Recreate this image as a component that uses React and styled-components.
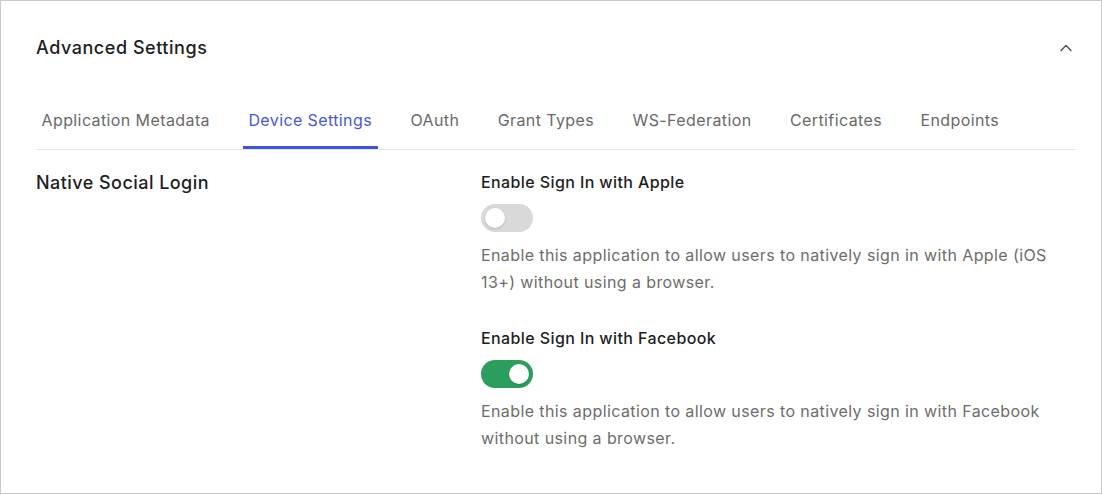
import React, { useState } from "react";
import styled, { createGlobalStyle } from "styled-components";

const Global = createGlobalStyle`
  html, body { margin: 0; padding: 0; background: #fff; }
  body { font-family: Inter, "Noto Sans", "Liberation Sans", sans-serif; -webkit-font-smoothing: antialiased; }
  * { box-sizing: border-box; }
`;

const Card = styled.div`
  width: 1102px;
  height: 494px;
  border: 1px solid #c9c9c9;
  padding: 35px 25px 0 35px;
  background: #fff;
`;

const Header = styled.div`
  display: flex;
  align-items: center;
  justify-content: space-between;
  height: 24px;
`;

const Title = styled.h2`
  margin: 0;
  font-size: 18px;
  line-height: 24px;
  font-weight: 450;
  color: #1e1e1e;
  letter-spacing: 0.03em;
`;

const Chevron = styled.button`
  border: 0;
  background: none;
  padding: 0;
  margin-right: 3px;
  display: flex;
  cursor: pointer;
`;

const TabList = styled.div`
  display: flex;
  gap: 26.9px;
  margin-top: 48px;
  border-bottom: 1px solid #e6e6e6;
`;

const Tab = styled.button`
  border: 0;
  background: none;
  font-family: inherit;
  font-size: 16px;
  line-height: 24px;
  letter-spacing: 0.025em;
  padding: 0 6px 14px 5.5px;
  margin: 0;
  color: ${(p) => (p.$active ? "#4658e0" : "#6a6a6a")};
  border-bottom: 3px solid ${(p) => (p.$active ? "#3d55e6" : "transparent")};
  cursor: pointer;
`;

const Body = styled.div`
  display: grid;
  grid-template-columns: 445px 1fr;
  padding-top: 20px;
`;

const SectionTitle = styled.h3`
  margin: 0;
  font-size: 18px;
  line-height: 26px;
  font-weight: 450;
  letter-spacing: 0.025em;
  color: #1e1e1e;
`;

const Fields = styled.div`
  display: flex;
  flex-direction: column;
  gap: 30px;
`;

const Field = styled.div`
  display: flex;
  flex-direction: column;
  align-items: flex-start;
`;

const Label = styled.div`
  font-size: 16px;
  line-height: 24px;
  font-weight: 450;
  letter-spacing: 0.025em;
  color: #1e1e1e;
`;

const Track = styled.button`
  position: relative;
  margin-top: 10px;
  width: 52px;
  height: 28px;
  border-radius: 14px;
  border: 0;
  padding: 0;
  cursor: pointer;
  background: ${(p) => (p.$on ? "#2b9d5d" : "#d9d9d9")};
`;

const Knob = styled.span`
  position: absolute;
  top: 4px;
  left: ${(p) => (p.$on ? "28px" : "4px")};
  width: 20px;
  height: 20px;
  border-radius: 50%;
  background: #fff;
  box-shadow: 0 1px 2px rgba(0, 0, 0, 0.18);
`;

const Desc = styled.p`
  margin: 10px 0 0;
  font-size: 16px;
  line-height: 27px;
  letter-spacing: 0.025em;
  color: #6d6d6d;
  max-width: 595px;
`;

const tabs = [
  "Application Metadata",
  "Device Settings",
  "OAuth",
  "Grant Types",
  "WS-Federation",
  "Certificates",
  "Endpoints",
];

function Toggle({ on, onClick }) {
  return (
    <Track $on={on} onClick={onClick} role="switch" aria-checked={on}>
      <Knob $on={on} />
    </Track>
  );
}

export default function App() {
  const [apple, setApple] = useState(false);
  const [fb, setFb] = useState(true);
  return (
    <>
      <Global />
      <Card>
        <Header>
          <Title>Advanced Settings</Title>
          <Chevron aria-label="Collapse">
            <svg width="14" height="14" viewBox="0 0 14 14" fill="none">
              <polyline
                points="2,9.5 7,4.5 12,9.5"
                stroke="#555"
                strokeWidth="1.5"
                strokeLinecap="round"
                strokeLinejoin="round"
              />
            </svg>
          </Chevron>
        </Header>
        <TabList>
          {tabs.map((t) => (
            <Tab key={t} $active={t === "Device Settings"}>
              {t}
            </Tab>
          ))}
        </TabList>
        <Body>
          <SectionTitle>Native Social Login</SectionTitle>
          <Fields>
            <Field>
              <Label>Enable Sign In with Apple</Label>
              <Toggle on={apple} onClick={() => setApple(!apple)} />
              <Desc>
                Enable this application to allow users to natively sign in with
                Apple (iOS 13+) without using a browser.
              </Desc>
            </Field>
            <Field>
              <Label>Enable Sign In with Facebook</Label>
              <Toggle on={fb} onClick={() => setFb(!fb)} />
              <Desc>
                Enable this application to allow users to natively sign in with
                Facebook without using a browser.
              </Desc>
            </Field>
          </Fields>
        </Body>
      </Card>
    </>
  );
}
